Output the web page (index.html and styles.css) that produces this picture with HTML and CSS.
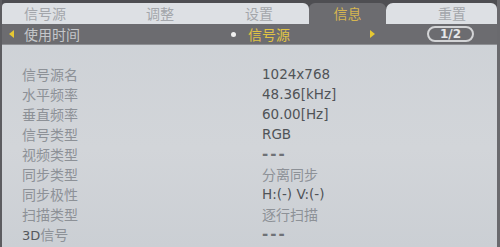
FILE: index.html
```html
<!DOCTYPE html>
<html lang="zh">
<head>
<meta charset="utf-8">
<link rel="stylesheet" href="styles.css">
</head>
<body>
<div class="screen">
  <div class="tabs">
    <div class="tab t1">信号源</div>
    <div class="tab t2">调整</div>
    <div class="tab t3">设置</div>
    <div class="tab t4 active">信息</div>
    <div class="tab t5">重置</div>
  </div>
  <div class="subbar">
    <div class="sub-left">
      <span class="tri-left"></span>
      <span class="sub-label">使用时间</span>
    </div>
    <div class="sub-mid">
      <span class="dot"></span>
      <span class="sub-current">信号源</span>
    </div>
    <span class="tri-right"></span>
    <span class="pager">1/2</span>
  </div>
  <div class="content">
    <div class="row"><span class="label">信号源名</span><span class="value">1024x768</span></div>
    <div class="row"><span class="label">水平频率</span><span class="value">48.36[kHz]</span></div>
    <div class="row"><span class="label">垂直频率</span><span class="value">60.00[Hz]</span></div>
    <div class="row"><span class="label">信号类型</span><span class="value">RGB</span></div>
    <div class="row"><span class="label">视频类型</span><span class="value dash">---</span></div>
    <div class="row"><span class="label">同步类型</span><span class="value light">分离同步</span></div>
    <div class="row"><span class="label">同步极性</span><span class="value">H:(-) V:(-)</span></div>
    <div class="row"><span class="label">扫描类型</span><span class="value light">逐行扫描</span></div>
    <div class="row"><span class="label"><span class="dark">3D</span>信号</span><span class="value dash">---</span></div>
  </div>
</div>
</body>
</html>
```

FILE: styles.css
```css
html, body {
  margin: 0;
  padding: 0;
}
body {
  width: 500px;
  height: 247px;
  overflow: hidden;
  background: #cfd3d8;
  font-family: "Noto Sans CJK SC", "DejaVu Sans", sans-serif;
}
.screen {
  width: 500px;
  height: 247px;
  display: flex;
  flex-direction: column;
  background: linear-gradient(180deg, #cdd1d6 0%, #d2d5d9 60%, #cbcfd4 100%);
  border-left: 2px solid #5c5c60;
  border-right: 3px solid #6a6a6e;
  box-sizing: border-box;
}
.tabs {
  display: flex;
  height: 24px;
  padding-top: 3px;
  box-sizing: border-box;
  background: #4e4e52;
}
.tab {
  height: 21px;
  line-height: 21px;
  font-size: 14px;
  text-align: center;
  color: #a3a6ab;
  background: #dde0e4;
  box-sizing: border-box;
}
.t1 { width: 113px; padding-right: 27px; border-top-left-radius: 4px; }
.t2 { width: 90px; }
.t3 { width: 104px; padding-left: 4px; border-top-right-radius: 6px; }
.t4 { width: 77px; }
.t5 { width: 111px; padding-left: 21px; border-top-left-radius: 7px; border-top-right-radius: 6px; }
.tab.active {
  background: #6c6c70;
  color: #d6b650;
  border-top-left-radius: 6px;
  border-top-right-radius: 6px;
}
.subbar {
  height: 20px;
  background: #6c6c70;
  display: flex;
  align-items: center;
  border-bottom: 1px solid #8e9094;
}
.sub-left {
  display: flex;
  align-items: center;
  width: 229px;
}
.tri-left {
  width: 0;
  height: 0;
  margin-left: 7px;
  border-top: 4px solid transparent;
  border-bottom: 4px solid transparent;
  border-right: 5px solid #e6c832;
}
.sub-label {
  margin-left: 10px;
  font-size: 14px;
  color: #c5c7ca;
}
.sub-mid {
  display: flex;
  align-items: center;
  width: 139px;
}
.dot {
  width: 5px;
  height: 5px;
  border-radius: 50%;
  background: #f0f0f0;
}
.sub-current {
  margin-left: 12px;
  font-size: 14px;
  color: #e0c345;
}
.tri-right {
  width: 0;
  height: 0;
  border-top: 4px solid transparent;
  border-bottom: 4px solid transparent;
  border-left: 5px solid #e6c832;
}
.pager {
  margin-left: 52px;
  width: 47px;
  height: 16px;
  box-sizing: border-box;
  border: 2px solid #d3d4d6;
  border-radius: 8px;
  color: #e6e7e9;
  font-family: "DejaVu Sans", sans-serif;
  font-weight: bold;
  font-size: 12px;
  line-height: 12px;
  text-align: center;
}
.content {
  padding: 19px 0 0 20px;
  display: flex;
  flex-direction: column;
}
.row {
  display: grid;
  grid-template-columns: 240px 1fr;
  height: 20px;
  line-height: 20px;
  font-size: 14px;
}
.label {
  color: #8d9197;
}
.dark {
  font-family: "DejaVu Sans", sans-serif;
  color: #55585d;
  font-size: 13px;
}
.value {
  font-family: "DejaVu Sans", sans-serif;
  font-size: 13.5px;
  color: #505357;
}
.value.light {
  font-family: "Noto Sans CJK SC", sans-serif;
  font-size: 14px;
  color: #8d9197;
}
.value.dash {
  color: #6e7176;
  font-weight: bold;
  font-size: 15px;
  letter-spacing: 2px;
}
```
